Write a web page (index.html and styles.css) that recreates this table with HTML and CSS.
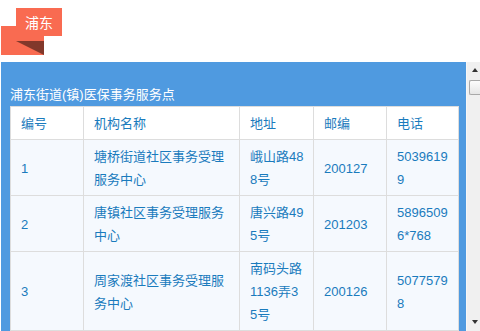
FILE: index.html
```html
<!DOCTYPE html>
<html lang="zh-CN">
<head>
<meta charset="utf-8">
<title>浦东</title>
<link rel="stylesheet" href="styles.css">
</head>
<body>
<header class="top">
  <div class="ribbon">
    <svg class="ribbon-shape" width="62" height="47" viewBox="0 0 62 47">
      <rect x="0" y="18" width="43" height="29" fill="#f96b51"/>
      <polygon points="15,33 43,33 43,47" fill="#82382b"/>
      <rect x="15" y="0" width="46" height="28" fill="#f96b51"/>
    </svg>
    <span class="ribbon-text">浦东</span>
  </div>
</header>
<div class="frame">
  <div class="panel">
    <div class="title">浦东街道(镇)医保事务服务点</div>
    <table class="grid">
      <colgroup>
        <col class="c-no"><col class="c-name"><col class="c-addr"><col class="c-zip"><col class="c-tel">
      </colgroup>
      <thead>
        <tr><th>编号</th><th>机构名称</th><th>地址</th><th>邮编</th><th>电话</th></tr>
      </thead>
      <tbody>
        <tr><td>1</td><td>塘桥街道社区事务受理服务中心</td><td>峨山路488号</td><td>200127</td><td>50396199</td></tr>
        <tr><td>2</td><td>唐镇社区事务受理服务中心</td><td>唐兴路495号</td><td>201203</td><td>58965096*768</td></tr>
        <tr><td>3</td><td>周家渡社区事务受理服务中心</td><td>南码头路1136弄35号</td><td>200126</td><td>50775798</td></tr>
      </tbody>
    </table>
  </div>
  <div class="scrollbar">
    <span class="arrow arrow-up"></span>
    <span class="thumb"></span>
    <span class="track"></span>
    <span class="arrow arrow-down"></span>
  </div>
</div>
</body>
</html>
```
FILE: styles.css
```css
html, body {
  margin: 0;
  padding: 0;
  background: #ffffff;
  overflow: hidden;
}
body {
  font-family: "Liberation Sans", "Noto Sans CJK SC", sans-serif;
  font-size: 13px;
}
.top {
  height: 62px;
  box-sizing: border-box;
  padding: 8px 0 0 1px;
}
.ribbon {
  position: relative;
  width: 62px;
  height: 47px;
}
.ribbon-shape {
  display: block;
}
.ribbon-text {
  position: absolute;
  left: 15px;
  top: 3px;
  width: 46px;
  height: 25px;
  line-height: 25px;
  text-align: center;
  color: #ffffff;
  font-size: 14px;
}
.frame {
  display: flex;
  height: 269px;
  margin-left: 1px;
}
.panel {
  flex: 1;
  min-width: 0;
  background: #4f9ae0;
  padding: 22px 9px 0;
  overflow: hidden;
}
.title {
  color: #ffffff;
  height: 22px;
  line-height: 22px;
  white-space: nowrap;
}
.grid {
  width: 100%;
  table-layout: fixed;
  border-collapse: collapse;
  background: #f5f9fe;
}
.c-no { width: 73px; }
.c-name { width: 156px; }
.c-addr { width: 74px; }
.c-zip { width: 73px; }
.c-tel { width: 72px; }
.grid th,
.grid td {
  border: 1px solid #dddddd;
  padding: 5px 9px 4px 10px;
  line-height: 23px;
  color: #1a7bbd;
  font-weight: normal;
  text-align: left;
  vertical-align: middle;
  word-break: break-all;
}
.grid thead th {
  background: #ffffff;
}
.scrollbar {
  width: 13px;
  background: #f0f0f0;
  display: flex;
  flex-direction: column;
  align-items: center;
  border-left: 1px solid #f7f7f7;
}
.arrow {
  width: 0;
  height: 0;
  border-left: 3px solid transparent;
  border-right: 3px solid transparent;
  margin-left: 2px;
}
.arrow-up {
  margin-top: 6px;
  border-bottom: 4px solid #333333;
}
.arrow-down {
  margin-bottom: 7px;
  border-top: 4px solid #333333;
}
.thumb {
  align-self: flex-end;
  width: 10px;
  height: 13px;
  margin-top: 8px;
  border: 1px solid #a9a9a9;
  border-right: 0;
  border-radius: 2px 0 0 2px;
  background: linear-gradient(#fdfdfd, #e6e6e6);
}
.track {
  flex: 1;
}
```
